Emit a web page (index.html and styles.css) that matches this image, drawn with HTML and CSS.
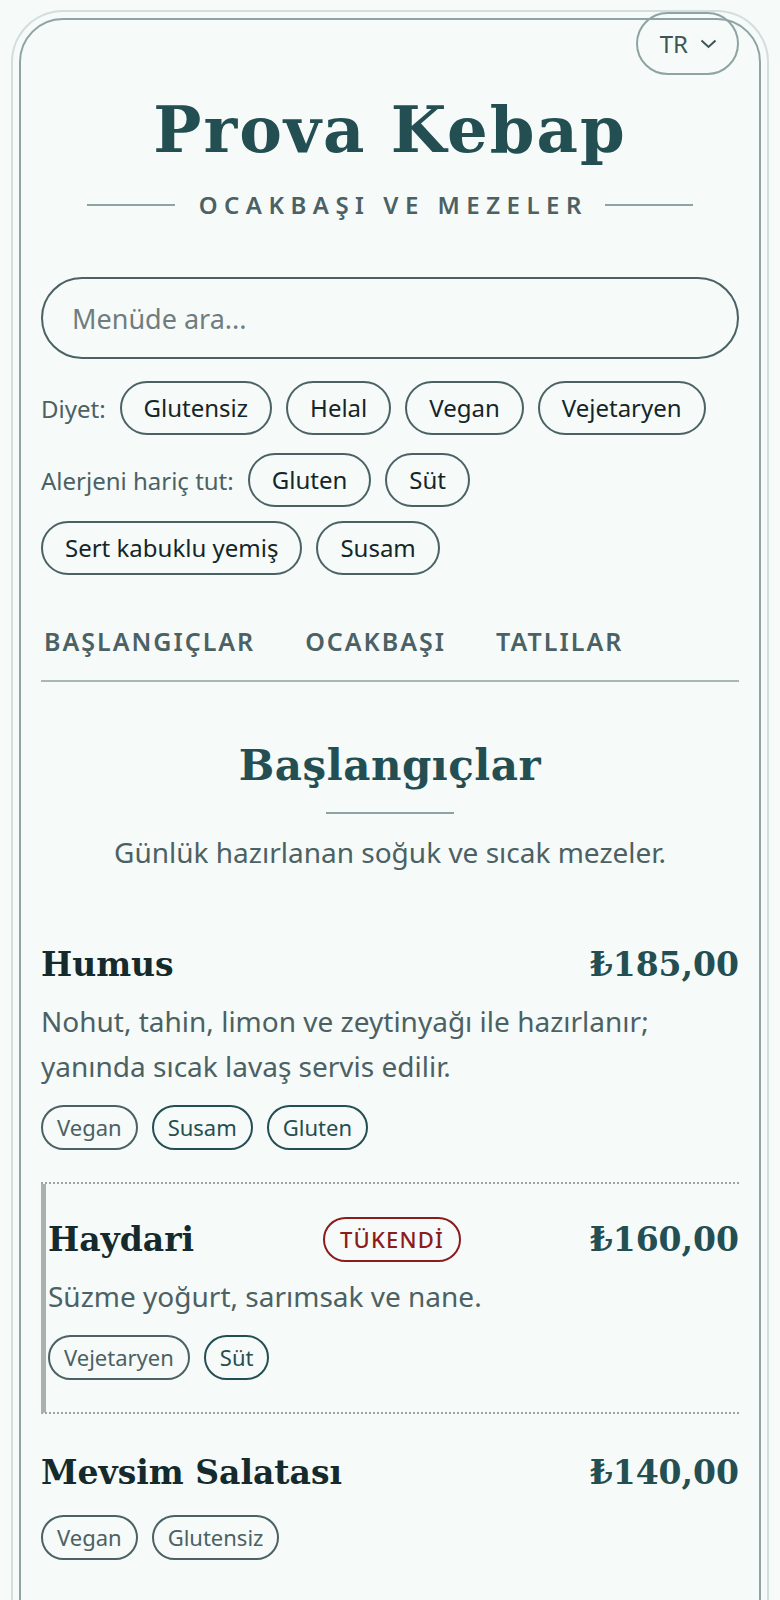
FILE: index.html
```html
<!DOCTYPE html>
<html lang="tr">
<head>
    <meta charset="UTF-8">
    <meta name="viewport" content="width=device-width, initial-scale=1.0">
    <title>Prova Kebap - Menü</title>
    <link rel="stylesheet" href="styles.css">
</head>
<body>
    <div class="page">
        <div class="menu-card">
            <button class="lang-btn" type="button">
                <span>TR</span>
                <svg class="chevron" width="17" height="10" viewBox="0 0 17 10"><polyline points="1.5,1.5 8.5,8 15.5,1.5" fill="none" stroke="#3d5556" stroke-width="2"/></svg>
            </button>

            <header class="header">
                <h1 class="brand">Prova Kebap</h1>
                <div class="tagline">
                    <span class="rule"></span>
                    <span class="tagline-text">OCAKBAŞI VE MEZELER</span>
                    <span class="rule"></span>
                </div>
            </header>

            <input class="search" type="text" placeholder="Menüde ara...">

            <div class="filters">
                <div class="filter-group">
                    <span class="filter-label">Diyet:</span>
                    <button class="chip" type="button">Glutensiz</button>
                    <button class="chip" type="button">Helal</button>
                    <button class="chip" type="button">Vegan</button>
                    <button class="chip" type="button">Vejetaryen</button>
                </div>
                <div class="filter-group">
                    <span class="filter-label">Alerjeni hariç tut:</span>
                    <button class="chip" type="button">Gluten</button>
                    <button class="chip" type="button">Süt</button>
                    <button class="chip" type="button">Sert kabuklu yemiş</button>
                    <button class="chip" type="button">Susam</button>
                </div>
            </div>

            <nav class="tabs">
                <a class="tab" href="#baslangiclar">BAŞLANGIÇLAR</a>
                <a class="tab" href="#ocakbasi">OCAKBAŞI</a>
                <a class="tab" href="#tatlilar">TATLILAR</a>
            </nav>

            <section class="category" id="baslangiclar">
                <h2 class="category-title">Başlangıçlar</h2>
                <p class="category-desc">Günlük hazırlanan soğuk ve sıcak mezeler.</p>

                <ul class="items">
                    <li class="item">
                        <div class="item-head">
                            <h3 class="item-name">Humus</h3>
                            <span class="price">₺185,00</span>
                        </div>
                        <p class="item-desc">Nohut, tahin, limon ve zeytinyağı ile hazırlanır; yanında sıcak lavaş servis edilir.</p>
                        <div class="tags">
                            <span class="tag">Vegan</span>
                            <span class="tag allergen">Susam</span>
                            <span class="tag allergen">Gluten</span>
                        </div>
                    </li>
                    <li class="item sold-out">
                        <div class="item-head">
                            <h3 class="item-name">Haydari</h3>
                            <span class="badge">TÜKENDİ</span>
                            <span class="price">₺160,00</span>
                        </div>
                        <p class="item-desc">Süzme yoğurt, sarımsak ve nane.</p>
                        <div class="tags">
                            <span class="tag">Vejetaryen</span>
                            <span class="tag allergen">Süt</span>
                        </div>
                    </li>
                    <li class="item">
                        <div class="item-head">
                            <h3 class="item-name">Mevsim Salatası</h3>
                            <span class="price">₺140,00</span>
                        </div>
                        <div class="tags">
                            <span class="tag">Vegan</span>
                            <span class="tag">Glutensiz</span>
                        </div>
                    </li>
                </ul>
            </section>
        </div>
    </div>
</body>
</html>
```

FILE: styles.css
```css
body {
    margin: 0;
    background-color: #f6faf9;
    font-family: "Noto Sans", "Open Sans", sans-serif;
    color: #152a2c;
}
.page {
    padding: 18px 19px 0;
}
.menu-card {
    position: relative;
    border: 2px solid #8fa3a3;
    border-radius: 44px;
    box-shadow: 0 0 0 6px #f6faf9, 0 0 0 8px #d2dedd;
    padding: 75px 20px 60px;
}
.lang-btn {
    position: absolute;
    top: -8px;
    right: 20px;
    height: 63px;
    display: flex;
    align-items: center;
    gap: 12px;
    padding: 0 20px 0 22px;
    border: 2px solid #8fa3a3;
    border-radius: 999px;
    background: transparent;
    font-family: "Noto Sans", "Open Sans", sans-serif;
    font-size: 24px;
    color: #3d5556;
}

/* header */
.brand {
    margin: 0;
    text-align: center;
    font-family: "DejaVu Serif", serif;
    font-weight: bold;
    font-size: 64px;
    line-height: 70px;
    letter-spacing: 2px;
    color: #234f52;
}
.tagline {
    display: flex;
    align-items: center;
    justify-content: center;
    gap: 24px;
    margin-top: 25px;
}
.tagline-text {
    font-size: 24px;
    font-weight: 600;
    line-height: 30px;
    letter-spacing: 6.5px;
    margin-right: -6.5px;
    color: #4b6163;
}
.rule {
    width: 88px;
    height: 2px;
    background: #8fa3a3;
}

/* search + filters */
.search {
    display: block;
    width: 100%;
    box-sizing: border-box;
    height: 82px;
    margin-top: 57px;
    padding: 0 29px;
    border: 2px solid #4a6264;
    border-radius: 41px;
    background: transparent;
    font-family: "Noto Sans", "Open Sans", sans-serif;
    font-size: 27px;
    color: #152a2c;
}
.search::placeholder {
    color: #707d7e;
}
.filters {
    margin-top: 22px;
}
.filter-group {
    display: flex;
    flex-wrap: wrap;
    align-items: center;
    gap: 14px;
}
.filter-group + .filter-group {
    margin-top: 18px;
}
.filter-label {
    font-size: 24px;
    color: #4b6163;
}
.chip {
    padding: 10px 22px;
    border: 2px solid #4a6264;
    border-radius: 999px;
    background: transparent;
    font-family: "Noto Sans", "Open Sans", sans-serif;
    font-size: 24px;
    line-height: 30px;
    color: #142628;
}

/* tabs */
.tabs {
    display: flex;
    gap: 50px;
    margin-top: 51px;
    padding: 0 0 23px 3px;
    border-bottom: 2px solid #a9b7b7;
}
.tab {
    font-size: 25px;
    font-weight: 600;
    line-height: 31px;
    letter-spacing: 2px;
    color: #4b6163;
    text-decoration: none;
}

/* category */
.category-title {
    margin: 59px 0 0;
    text-align: center;
    font-family: "DejaVu Serif", serif;
    font-weight: bold;
    font-size: 42px;
    line-height: 49px;
    letter-spacing: 0.5px;
    color: #234f52;
}
.category-title::after {
    content: "";
    display: block;
    width: 128px;
    height: 2px;
    margin: 22px auto 0;
    background: #8fa3a3;
}
.category-desc {
    margin: 19px 0 0;
    text-align: center;
    font-size: 28px;
    line-height: 39px;
    color: #4b6163;
}
.items {
    list-style: none;
    margin: 37px 0 0;
    padding: 0;
}
.item {
    padding: 33px 0 32px;
    border-bottom: 2px dotted #9aa6a6;
}
.item:last-child {
    border-bottom: none;
    padding-top: 36px;
}
.item.sold-out {
    border-left: 5px solid #a8b1b0;
    padding-left: 2px;
}
.item-head {
    display: flex;
    justify-content: space-between;
    align-items: center;
    min-height: 45px;
}
.item-name,
.price {
    margin: 0;
    font-family: "DejaVu Serif", serif;
    font-weight: bold;
    font-size: 33px;
    line-height: 45px;
}
.item-name {
    color: #152a2c;
}
.price {
    color: #234f52;
}
.badge {
    padding: 7px 15px;
    border: 2px solid #8b1c1c;
    border-radius: 999px;
    font-size: 22px;
    font-weight: 500;
    line-height: 27px;
    letter-spacing: 1.2px;
    color: #8b1c1c;
}
.item-desc {
    margin: 12px 0 -4px;
    font-size: 28px;
    line-height: 45px;
    color: #4b6163;
}
.tags {
    display: flex;
    flex-wrap: wrap;
    gap: 14px;
    margin-top: 20px;
}
.tag {
    padding: 7px 14px;
    border: 2px solid #4b6163;
    border-radius: 999px;
    font-size: 22px;
    line-height: 27px;
    color: #4b6163;
}
.tag.allergen {
    border-color: #234f52;
    color: #234f52;
}
```
